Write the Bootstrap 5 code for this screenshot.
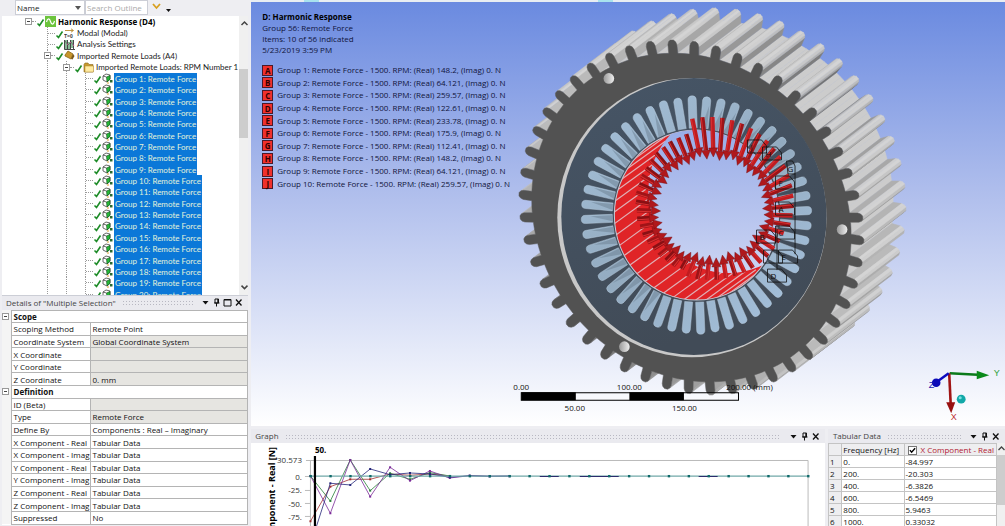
<!DOCTYPE html>
<html lang="en">
<head>
<meta charset="utf-8">
<meta name="viewport" content="width=device-width, initial-scale=1">
<title>Harmonic Response</title>
<link href="https://cdn.jsdelivr.net/npm/bootstrap@5.3.0/dist/css/bootstrap.min.css" rel="stylesheet">
<style>
body{background:#eeeef2;font:8px/12px "Open Sans","Noto Sans",sans-serif;color:#111}
svg{display:block}
button{border:0;background:none;padding:0;color:#111}
.side{flex:0 0 25%;min-width:0;padding-right:3px}
.filterbar{height:16px;flex:none;padding-left:15px}
.filterbar select,.filterbar input{appearance:none;border:1px solid #ccced6;border-radius:0;background:#fff;height:15px;font-size:8px;line-height:12px;padding:0 1px;outline:0}
.filterbar select{width:70px;color:#222;background:#fff url("data:image/svg+xml,%3Csvg xmlns='http://www.w3.org/2000/svg' width='6' height='4'%3E%3Cpath d='M0 0h6L3 4z' fill='%23555'/%3E%3C/svg%3E") no-repeat right 3px center}
.filterbar input{width:63px}
.filterbar input::placeholder{color:#aaa;opacity:1}
.tree-pane{flex:1 1 0;margin-left:2px;background:#fff}
.tree-list{font-family:Lato,"Open Sans",sans-serif;height:102%;color:#222}
.tree-list li{flex:1 1 0;display:flex;align-items:center;min-height:0;white-space:nowrap}
.gd{flex:none;width:19px;align-self:stretch}
.gd.first-col{width:17px}
.gd.on,.cell.on{background:repeating-linear-gradient(#999 0 1px,#fff 1px 2px) 9px 0/1px 100% no-repeat}
.cell{flex:none;width:17px;align-self:stretch;display:flex;align-items:center;padding-left:6px}
.cell:after{content:"";flex:1;border-top:1px dotted #999}
.cell.leaf{padding-left:10px}
.xp{width:7px;height:7px;border:1px solid #999;background:#fff linear-gradient(#444,#444) center/3px 1px no-repeat;flex:none}
.tree-list svg{flex:none}
.tree-list a{color:#222;text-decoration:none;margin-left:1px;line-height:12px;padding:0 1px}
.tree-list .top a{font:bold 8px/12px "Open Sans",sans-serif;color:#000}
.tree-list .sel a{background:#0b78d8;color:#e4f3d8;align-self:stretch}
.sbar{flex:none;width:10px;background:#f0f0f0}
.sbar.slim{width:8px}
.ptitle{flex:none;height:14px;background:#eaeaef;color:#444;padding:0 5px}
.ptitle button{margin-left:2px}
.grip{flex:1;height:5px;margin:0 6px;background:radial-gradient(circle,#b8b8c2 1px,transparent 1px) 0 0/3px 3px}
.details{flex:0 0 44%;margin-left:2px;border-top:1px solid #ccced6}
.details table{width:100%;height:215px;table-layout:fixed;border-collapse:collapse;background:#fff}
.details td,.details th{border:1px solid #b4b4b4;padding:0 0 0 2px;line-height:11px;font-weight:400;white-space:nowrap;overflow:hidden}
.details td.ex{border:0;border-right:1px solid #b4b4b4;padding:0;background:#f4f4f4}
.details tr.grp th{font-weight:700}
.c-ex{width:9px}.c-name{width:79px}.c-idx{width:8%}.c-freq{width:37%}
.ro{background:#e6e5e1}
.topstrip{height:2px;flex:none;background:linear-gradient(90deg,#e8edf2 7%,#a8e2ee 7% 9%,#e8edf2 9% 46%,#a8e2ee 46% 48%,#e8edf2 48%)}
.view{flex:1 1 0;min-height:0;position:relative;overflow:hidden;background:linear-gradient(#6a8ae0,#fff)}
.view>svg{position:absolute;inset:0;width:100%;height:100%}
.legend{position:relative;padding:9px 0 0 11px;color:#10143a}
.legend .head{height:43px;display:grid;grid-template-rows:repeat(4,1fr);line-height:11px}
.legend .head b{color:#000}
.legend ul{height:126px;margin-top:10px;display:grid;grid-template-rows:repeat(10,1fr)}
.legend li{display:flex;align-items:center;gap:4px;line-height:12px}
.key{width:11px;height:11px;background:#f0302c;border:1px solid #4a1a2a;color:#300;font-weight:700;line-height:9px;text-align:center}
.bottom{flex:0 0 19%;gap:3px;min-height:0;padding-top:3px}
.graph{flex:1 1 0;min-width:0;background:#fff;overflow:hidden}
.graph svg.plot{width:100%}
.tab{flex:0 0 23.5%;background:#fff;overflow:hidden}
.tab table{width:100%;table-layout:fixed;border-collapse:collapse}
.tab td,.tab th{border:1px solid #c4c4c4;padding:0 0 0 1px;font-weight:400;height:12px;line-height:11px;white-space:nowrap;overflow:hidden}
.tab thead th,.tab tbody th{background:#eeeef0}
.tab input{appearance:none;width:9px;height:9px;margin:0 4px 0 2px;border:1px solid #777;vertical-align:-2px;background:#fff url("data:image/svg+xml,%3Csvg xmlns='http://www.w3.org/2000/svg' viewBox='0 0 8 8'%3E%3Cpath d='M1 3.5L3 6L7 1.5' fill='none' stroke='%23000' stroke-width='1.6'/%3E%3C/svg%3E") center/7px no-repeat}
.tab label{color:#b22030}
</style>
</head>
<body>
<svg width="0" height="0" class="position-absolute"><defs>
<symbol id="chk" viewBox="0 0 9 11"><path d="M1.500 7.500L3.500 9.500L7.500 3.500" fill="none" stroke="#1e8c28" stroke-width="1.600"/></symbol>
<symbol id="cube" viewBox="0 0 11 11"><path d="M1 3L4 1L8 2V6L5 9L1 7Z" fill="#fff" stroke="#444" stroke-width=".8"/><path d="M4.500 4L8 2.500V6.500L5 9Z" fill="#24b838" stroke="#164a1c" stroke-width=".6"/><path d="M1 3L4.500 4" stroke="#333" stroke-width=".7"/><path d="M8 7h2.500v2.500H8z" fill="#2a6a30"/><path d="M5 10h2" stroke="#e0a030"/></symbol>
<symbol id="wave" viewBox="0 0 11 11"><path d="M0 0h11v11H0z" fill="#6cc43c"/><path d="M1.500 6C2.500 2 4.500 2 5.500 5.500S8.500 9 9.500 5" fill="none" stroke="#fff" stroke-width="1.200"/></symbol>
<symbol id="t0" viewBox="0 0 11 11"><path d="M1 2.500h8M7 .8L9.500 2.500L7 4.200" fill="none" stroke="#b88a30" stroke-width=".9"/><text x="0" y="10" font-size="5" font-family="Liberation Sans" font-weight="700" fill="#333">T=0</text></symbol>
<symbol id="sett" viewBox="0 0 11 11"><path d="M.5 1v9.500h10.500M3.500 1v9M6.500 1v9M9.500 1v9" fill="none" stroke="#333" stroke-width=".9"/><path d="M1 2L4 6L7 3L10 7" fill="none" stroke="#c05090"/><path d="M2 1v9M5 3v7M8 1v8" stroke="#3a8a50" stroke-width="1.200"/></symbol>
<symbol id="load" viewBox="0 0 11 11"><path d="M1 5L4 1L9 4L7 9L1 6Z" fill="#c8962c" stroke="#8a6414" stroke-width=".8"/><path d="M7 9L9 4l1.500 2L8.500 9.500z" fill="#7a5818"/></symbol>
<symbol id="fold" viewBox="0 0 11 11"><path d="M1 2.500L2 1h3l1 1.500h4V10H1Z" fill="#c89a30" stroke="#8a6a20" stroke-width=".6"/><path d="M2 4h8.500v6H2z" fill="#ffeaa0" stroke="#a8842c" stroke-width=".5"/></symbol>
<symbol id="dn" viewBox="0 0 9 9"><path d="M1.500 3h6L4.500 6.500Z" fill="#111"/></symbol>
<symbol id="pin" viewBox="0 0 9 9"><path d="M3 1h3.500v4H3zM2 5h5.500M4.500 5v3.500M5.800 1v4" fill="none" stroke="#111"/></symbol>
<symbol id="sq" viewBox="0 0 9 9"><path d="M1 1.500h7v6.500H1zM1 2h7" fill="none" stroke="#111"/></symbol>
<symbol id="cls" viewBox="0 0 9 9"><path d="M2 1.500L7.500 7.500M7.500 1.500L2 7.500" stroke="#111" stroke-width="1.300"/></symbol>
</defs></svg>

<div class="d-flex vh-100 overflow-hidden">
  <aside class="side d-flex flex-column">
    <form class="filterbar d-flex align-items-start">
      <select aria-label="Filter by"><option>Name</option></select>
      <input type="text" placeholder="Search Outline" aria-label="Search Outline">
      <button type="button" aria-label="Expand" class="ms-1"><svg width="9" height="12" viewBox="0 0 9 12"><path d="M1 4l3.500 4L8 4" fill="none" stroke="#d8a020" stroke-width="1.800"/></svg></button>
      <button type="button" aria-label="More" class="ms-1"><svg width="6" height="14" viewBox="0 0 6 14"><path d="M1 9h5L3.500 12z" fill="#111"/></svg></button>
    </form>
    <div class="tree-pane d-flex overflow-hidden">
      <ul class="tree-list list-unstyled d-flex flex-column flex-fill mb-0" id="tree"></ul>
      <div class="sbar"><svg width="10" height="100%"><path d="M2.500 9L5.500 6L8.500 9" fill="none" stroke="#444" stroke-width="1.500"/><rect y="53" width="10" height="69" fill="#cdcdcd"/><svg y="95%" width="10" height="14" overflow="visible"><path d="M2.500 5L5.500 8L8.500 5" fill="none" stroke="#444" stroke-width="1.500"/></svg></svg></div>
    </div>
    <section class="details overflow-hidden">
      <div class="ptitle d-flex align-items-center ps-1" data-pt="dn pin sq cls"><span>Details of "Multiple Selection"</span></div>
      <table><colgroup><col class="c-ex"><col class="c-name"><col></colgroup><tbody id="det"></tbody></table>
    </section>
  </aside>
  <main class="d-flex flex-column flex-fill overflow-hidden">
    <div class="topstrip"></div>
    <section class="view">
      <svg id="scene" viewBox="252 2 753 424" preserveAspectRatio="xMidYMid slice" role="img" aria-label="Stator model with remote forces"></svg>
      <div class="legend">
        <div class="head"><b>D: Harmonic Response</b><span>Group 56: Remote Force</span><span>Items: 10 of 56 indicated</span><span>5/23/2019 3:59 PM</span></div>
        <ul class="list-unstyled mb-0" id="leg"></ul>
      </div>
    </section>
    <div class="bottom d-flex">
      <section class="graph">
        <div class="ptitle d-flex align-items-center ps-1" data-pt="dn pin cls"><span>Graph</span></div>
        <svg class="plot" id="plot" viewBox="252 443 574 83" preserveAspectRatio="xMinYMin meet"></svg>
      </section>
      <section class="tab">
        <div class="ptitle d-flex align-items-center" data-pt="dn pin cls"><span>Tabular Data</span></div>
        <div class="d-flex">
          <table><colgroup><col class="c-idx"><col class="c-freq"><col></colgroup>
            <thead><tr><th></th><th>Frequency [Hz]</th><th><input type="checkbox" id="xr" checked><label for="xr">X Component - Real</label></th></tr></thead>
            <tbody id="tb"></tbody></table>
          <div class="sbar slim"><svg width="8" height="82"><path d="M1.500 7L4.500 4L7.500 7" fill="none" stroke="#444" stroke-width="1.300"/><rect y="12" width="8" height="50" fill="#cdcdcd"/></svg></div>
        </div>
      </section>
    </div>
  </main>
</div>
<script>
const $=id=>document.getElementById(id), use=(n,w=11,h=11)=>`<svg width="${w}" height="${h}" aria-hidden="true"><use href="#${n}"/></svg>`;
// panel title bars
const names={dn:'Menu',pin:'Auto hide',sq:'Maximize',cls:'Close'};
document.querySelectorAll('[data-pt]').forEach(e=>{
  e.insertAdjacentHTML('beforeend','<span class="grip"></span>'+e.dataset.pt.split(' ').map(n=>`<button type="button" aria-label="${names[n]}">${use(n,9,9)}</button>`).join(''));
});
// outline tree
const row=(lv,ic,t,leaf,cls='')=>{
  let g='<span class="gd"></span>'; for(let i=1;i<lv;i++) g+='<span class="gd on"></span>';
  if(!lv) g='';
  return `<li class="${cls}"><span class="gd first-col"></span>${g}<span class="cell ${leaf?'leaf':''} ${lv?'on':''}">${leaf?'':'<i class="xp"></i>'}</span>${use('chk',9,11)}${use(ic)}<a href="#">${t}</a></li>`};
$('tree').innerHTML=row(0,'wave','Harmonic Response (D4)',0,'top')+row(1,'t0','Modal (Modal)',1)+row(1,'sett','Analysis Settings',1)+row(1,'load','Imported Remote Loads (A4)',0)+row(2,'fold','Imported Remote Loads: RPM Number 1',0)
 +Array.from({length:20},(_,i)=>row(3,'cube',`Group ${i+1}: Remote Force`,1,'sel')).join('');
// property grid
$('det').innerHTML=[['Scope'],['Scoping Method','Remote Point'],['Coordinate System','Global Coordinate System',1],['X Coordinate','',1],['Y Coordinate','',1],['Z Coordinate','0. mm',1],['Definition'],['ID (Beta)','',1],['Type','Remote Force',1],['Define By','Components : Real – Imaginary'],['X Component - Real','Tabular Data'],['X Component - Imag','Tabular Data'],['Y Component - Real','Tabular Data'],['Y Component - Imag','Tabular Data'],['Z Component - Real','Tabular Data'],['Z Component - Imag','Tabular Data'],['Suppressed','No']]
 .map(r=>r.length==1?`<tr class="grp"><td class="ex"><i class="xp d-block"></i></td><th colspan="2">${r[0]}</th></tr>`:`<tr><td class="ex"></td><th>${r[0]}</th><td class="${r[2]?'ro':''}">${r[1]}</td></tr>`).join('');
$('leg').innerHTML=['148.2','64.121','259.57','122.61','233.78','175.9','112.41','148.2','64.121','259.57'].map((v,i)=>`<li><span class="key">${'ABCDEFGHIJ'[i]}</span>Group ${i+1}: Remote Force - 1500. RPM: (Real) ${v}, (Imag) 0. N</li>`).join('');
$('tb').innerHTML=[['0.','-84.997'],['200.','-20.303'],['400.','-6.3826'],['600.','-6.5469'],['800.','5.9463'],['1000.','0.33032']].map((r,i)=>`<tr><th>${i+1}</th><td>${r[0]}</td><td>${r[1]}</td></tr>`).join('');

// 3D model
const P=(x,y)=>x.toFixed(1)+','+y.toFixed(1), N=48, cx=692,cy=217.5, D=[42,-32];
const pt=(a,k=1)=>{const c=Math.cos(a)*k,s=Math.sin(a)*k;return [cx+172*c+10*s,cy+10*c+177*s]};
const prof=[];
for(let i=0;i<N;i++){
  const a=(i*7.5-93.2)*Math.PI/180, h=.0262, g=Math.PI/N, R=.926;
  prof.push(pt(a-g,R),pt(a-h*1.1,R),pt(a-h*1.02,.975),pt(a-h*.8,.99),pt(a-h*.35,1),pt(a+h*.35,1),pt(a+h*.8,.99),pt(a+h*1.02,.975),pt(a+h*1.1,R));
}
let s=`<defs><linearGradient id="sky" gradientUnits="userSpaceOnUse" x1="0" y1="2" x2="0" y2="426"><stop offset="0" stop-color="#6a8ae0"/><stop offset=".44" stop-color="#aebdec"/><stop offset="1" stop-color="#fff"/></linearGradient>
<linearGradient id="blu" x1="0" y1="0" x2=".3" y2="1"><stop offset="0" stop-color="#465566"/><stop offset="1" stop-color="#414b57"/></linearGradient>
<linearGradient id="slot" gradientUnits="userSpaceOnUse" x1="600" y1="100" x2="790" y2="330"><stop offset="0" stop-color="#a4bfd8"/><stop offset=".5" stop-color="#93abc0"/><stop offset="1" stop-color="#a6c2de"/></linearGradient>
<linearGradient id="pin1"><stop offset="0" stop-color="#999"/><stop offset="1" stop-color="#eee"/></linearGradient>
<clipPath id="bore"><ellipse cx="697" cy="215" rx="82" ry="85"/></clipPath></defs>
<rect x="0" y="-200" width="1400" height="202" fill="#6a8ae0"/><rect x="0" y="2" width="1400" height="424" fill="url(#sky)"/>`;
const q=[];
for(let i=0;i<prof.length;i++){
  const a=prof[i],b=prof[(i+1)%prof.length],nx=b[1]-a[1],ny=a[0]-b[0],l=Math.hypot(nx,ny)||1;
  if(nx*D[0]+ny*D[1]<=0) continue;
  const m=(a[0]+b[0])/2*D[0]+(a[1]+b[1])/2*D[1], k=i%9;
  const root=k==0||k==8, wall=k==1||k==7;
  const f=(nx*.6-ny*.8)/l;
  const v=Math.round(root?204:wall?118+f*70:150+f*62);
  q.push([m,`<path d="M${P(...a)}L${P(...b)}L${P(b[0]+D[0],b[1]+D[1])}L${P(a[0]+D[0],a[1]+D[1])}Z" fill="rgb(${v},${v},${v})" stroke="rgb(${v},${v},${v})" stroke-width=".5"/>`]);
}
q.sort((a,b)=>a[0]-b[0]); s+=q.map(x=>x[1]).join('');
s+=`<path d="M${prof.map(p=>P(...p)).join('L')}Z" fill="#525252" stroke="#5c5c5c" stroke-width=".5"/>`;
[[609.5,78.5],[625,346.500],[842.500,229.500]].forEach(p=>s+=`<circle cx="${p[0]}" cy="${p[1]}" r="5.300" fill="url(#pin1)"/>`);
s+=`<ellipse cx="692.500" cy="217.500" rx="134.500" ry="139.500" fill="#c8c8c8"/><ellipse cx="694.500" cy="216.500" rx="132.500" ry="138.300" fill="url(#blu)"/>`;
for(let i=0;i<N;i++){
  const a=(i*7.5-2.2)*Math.PI/180,c=Math.cos(a),d=Math.sin(a);
  const x1=697+111*c,y1=215+115*d,x2=697+84*c,y2=215+87*d,l=Math.hypot(x1-x2,y1-y2),ux=(x1-x2)/l,uy=(y1-y2)/l,px=-uy,py=ux,w=4.1,w2=4;
  s+=`<path d="M${P(x2+px*w2,y2+py*w2)}L${P(x1+px*w,y1+py*w)}A${w} ${w} 0 0 0 ${P(x1-px*w,y1-py*w)}L${P(x2-px*w2,y2-py*w2)}Z" fill="url(#slot)" stroke="#b4c8da" stroke-width=".5"/>`;
  if(i>15&&i<34||i>36&&i<45) s+=`<path d="M${P(x2+px*3,y2+py*3)}L${P(x1+px*3-ux*5,y1+py*3-uy*5)}L${P(x2-px*3,y2-py*3)}Z" fill="#6f8496" opacity=".55"/>`;
}
s+=`<ellipse cx="697" cy="215" rx="82" ry="85" fill="#e02427" stroke="#c6ccd8"/><g clip-path="url(#bore)">`;
for(let i=0;i<N;i++){const a=(i*7.5+1.500)*Math.PI/180,x=697+83*Math.cos(a),y=215+86*Math.sin(a);s+=`<path d="M${P(x,y)}l40,-29" stroke="#e0b0b6" stroke-width="1.200"/>`}
s+=`<ellipse cx="729" cy="191" rx="80" ry="82" fill="url(#sky)"/></g>`;
for(let i=0;i<52;i++){
  const a=(i*360/52+2)*Math.PI/180,c=Math.cos(a),d=Math.sin(a),j=(i*7%5-2);
  const t=c<-.3?.32:d>.3?.12:0;
  const x1=710+84*c,y1=203+86*d-(d>0?6*d:0),x2=712+(53+j)*c,y2=207+(49+j)*d,l=Math.hypot(x2-x1,y2-y1),ux=(x2-x1)/l,uy=(y2-y1)/l;
  const x3=x2-ux*9,y3=y2-uy*9,col=c<-.3?(i%2?'#a01418':'#8a1014'):(i%2?'#c01c20':'#9c1418');
  const sx=x1+(x2-x1)*t,sy=y1+(y2-y1)*t;
  s+=`<path d="M${P(sx,sy)}L${P(x3,y3)}" stroke="${col}" stroke-width="4.400"/><path d="M${P(sx-uy,sy+ux)}L${P(x3-uy,y3+ux)}" stroke="#d83030" stroke-width="1"/><path d="M${P(x2,y2)}L${P(x3-uy*4.5,y3+ux*4.5)}L${P(x3+uy*4.5,y3-ux*4.5)}Z" fill="#b0181c" stroke="#6c0c10" stroke-width=".4"/>`;
}
[['J',748,140],['H',763,147],['F',776,176],['A',776,202],['C',776,226],['B',757,230],['I',764,250],['E',779,250],['D',768,269]].forEach(([t,x,y])=>{
  s+=`<path d="M${x} ${y}h14l5 6v7h-19z" fill="none" stroke="#111" stroke-width=".8"/><text x="${x+3}" y="${y+10}" font-size="8" fill="#111">${t}</text>`});
s+=`<path d="M787 161h6l2.500 5v8h-7z" fill="none" stroke="#111" stroke-width=".8"/><text x="788" y="172" font-size="8" fill="#111">G</text><path d="M795.500 174v80M777.500 225v45" stroke="#111" stroke-width=".8"/>`;
// scale bar
s+=`<path d="M522 392.500h217v7.500h-217z" fill="#fff" fill-opacity=".3" stroke="#000"/><path d="M522 392h54.500v8h-54.500zM630 392h54.500v8h-54.500z"/><g font-size="8" font-family="Open Sans" text-anchor="middle" fill="#111"><text x="522" y="390">0.00</text><text x="630" y="390">100.00</text><text x="575.500" y="411">50.00</text><text x="685" y="411">150.00</text><text x="750" y="390">200.00 (mm)</text></g>`;
// axis triad
s+=`<g><path d="M950 373L978 374.500" stroke="#0a7a1a" stroke-width="2.600"/><path d="M977 370.500l12.500 4.500L977 379z" fill="#0a8a1a"/><path d="M949.500 373L951 404" stroke="#a01414" stroke-width="2.600"/><path d="M946.500 402h9L951.500 413z" fill="#981010"/><path d="M949 373L938 381" stroke="#0c0cc0" stroke-width="2.400"/><circle cx="936.500" cy="382.500" r="4.300" fill="#0a0ab8"/><circle cx="961.500" cy="399" r="4.400" fill="#12a8a8"/><circle cx="960.500" cy="397.500" r="1.500" fill="#7ae0e0"/><g font-size="9" font-family="Liberation Sans"><text x="994" y="376" fill="#2aa03a">Y</text><text x="951" y="420" fill="#c03030">X</text><text x="929" y="388" fill="#1a1ab0">Z</text></g></g>`;
$('scene').innerHTML=s;

// response graph
let g=`<path d="M307 460.500H809.500V530" fill="none" stroke="#bbb"/><path d="M311.500 460V530M306 476.500h6M306 490.500h6M306 503.500h6M306 516.500h6" fill="none" stroke="#bbb"/>`;
const X=k=>311.5+k*19.92, ser=(col,ys,k0=0)=>{g+=`<path d="M${ys.map((y,i)=>P(X(i+k0),420+y/3)).join('L')}" fill="none" stroke="${col}" stroke-width=".8"/>`+ys.map((y,i)=>`<rect x="${X(i+k0)-1}" y="${419+y/3}" width="2" height="2" fill="${col}"/>`).join('')};
ser('#a03030',[304,200,178,178,162,166,162,168]);ser('#2a8038',[168,243,120,212,160,178,158,168]);ser('#7a2a98',[168,280,120,230,142,182,153,174,167,169,169]);ser('#26267a',[375,190,195,147,164,159,162,172,167,169,168]);
g+=`<path d="M311 476.200H809" stroke="#70a8a8" stroke-width="1.300"/>`;
[[541,560],[581,620],[700,719]].forEach(r=>g+=`<path d="M${r[0]} 476.500H${r[1]}" stroke="#28286a"/>`);
for(let k=0;k<26;k++)g+=`<rect x="${X(k)-1}" y="475" width="2.400" height="2.400" fill="#106a6a"/>`;
g+=`<path d="M316 456V530" stroke="#000" stroke-width="2.200"/><g font-family="Open Sans" font-size="8" text-anchor="end" fill="#333"><text x="303" y="463">30.573</text><text x="303" y="480">0.</text><text x="303" y="493">-25.</text><text x="303" y="507">-50.</text><text x="303" y="520">-75.</text></g><text x="316" y="453" font-family="Open Sans" font-size="8" font-weight="700">50.</text><text transform="translate(276 447) rotate(-90)" text-anchor="end" font-family="Open Sans" font-size="9" font-weight="700">X Component - Real [N]</text>`;
$('plot').innerHTML=g;
</script>
<script src="https://cdn.jsdelivr.net/npm/bootstrap@5.3.0/dist/js/bootstrap.bundle.min.js"></script>
</body>
</html>
